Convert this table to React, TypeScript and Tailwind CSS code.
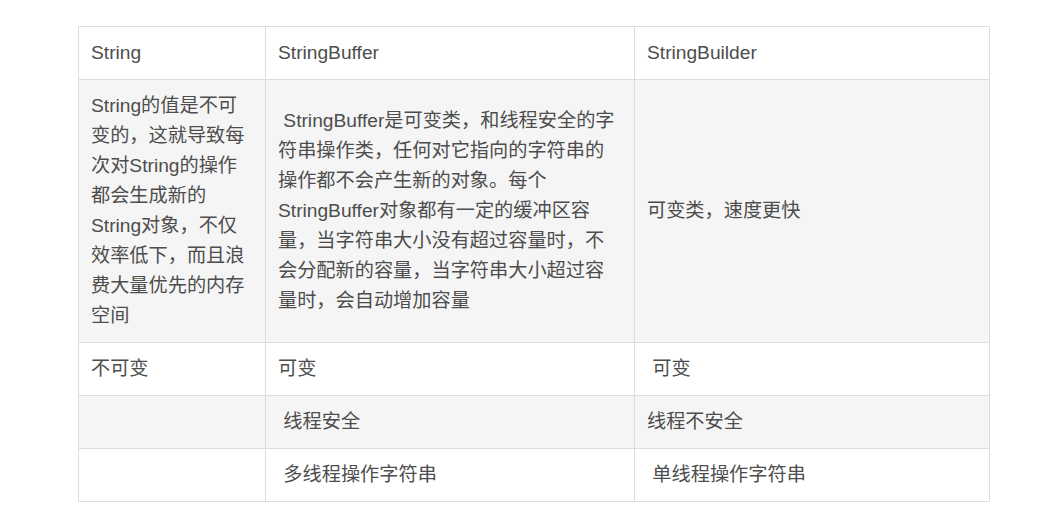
import React from "react";

const cell = "border border-[#dddddd] px-[12px] py-[11px] align-middle";

export default function App() {
  return (
    <div className="w-[1060px] h-[524px] bg-white pt-[26px] pl-[78px]">
      <table
        className="border-collapse table-fixed w-[911px] text-[19.2px] leading-[30px] text-[#4d4d4d]"
        style={{ fontFamily: '"Liberation Sans", Arial, "Noto Sans CJK SC", sans-serif' }}
      >
        <colgroup>
          <col className="w-[187px]" />
          <col className="w-[369px]" />
          <col className="w-[355px]" />
        </colgroup>
        <tbody>
          <tr className="bg-white">
            <td className={cell}>String</td>
            <td className={cell}>StringBuffer</td>
            <td className={cell}>StringBuilder</td>
          </tr>
          <tr className="bg-[#f5f5f5]">
            <td className={cell}>
              String的值是不可变的，这就导致每次对String的操作都会生成新的String对象，不仅效率低下，而且浪费大量优先的内存空间
            </td>
            <td className={cell}>
              {"\u00a0"}StringBuffer是可变类，和线程安全的字符串操作类，任何对它指向的字符串的操作都不会产生新的对象。每个StringBuffer对象都有一定的缓冲区容量，当字符串大小没有超过容量时，不会分配新的容量，当字符串大小超过容量时，会自动增加容量
            </td>
            <td className={cell}>可变类，速度更快</td>
          </tr>
          <tr className="bg-white">
            <td className={cell}>不可变</td>
            <td className={cell}>可变</td>
            <td className={cell}>{"\u00a0"}可变</td>
          </tr>
          <tr className="bg-[#f5f5f5]">
            <td className={cell}></td>
            <td className={cell}>{"\u00a0"}线程安全</td>
            <td className={cell}>线程不安全</td>
          </tr>
          <tr className="bg-white">
            <td className={cell}></td>
            <td className={cell}>{"\u00a0"}多线程操作字符串</td>
            <td className={cell}>{"\u00a0"}单线程操作字符串</td>
          </tr>
        </tbody>
      </table>
    </div>
  );
}
